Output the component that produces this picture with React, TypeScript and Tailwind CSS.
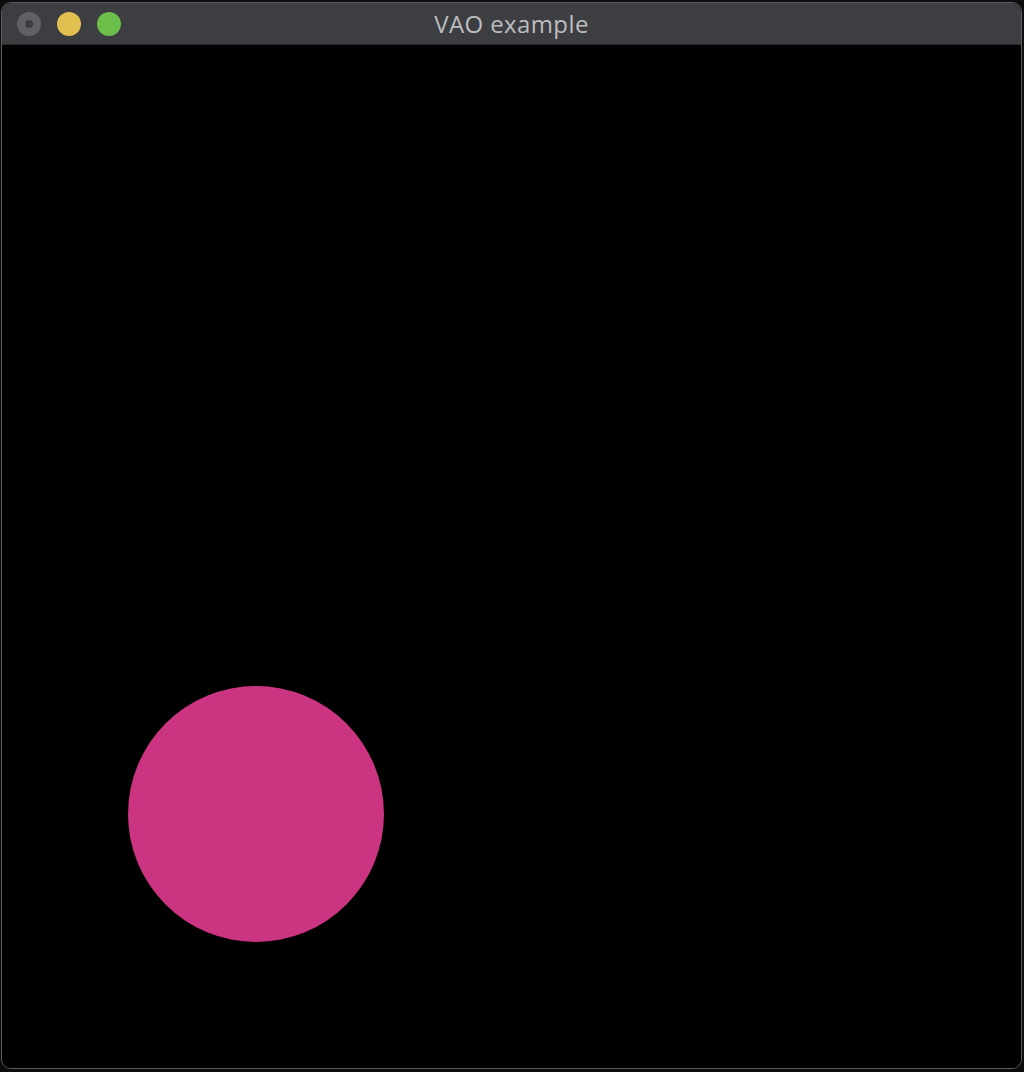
const TrafficLight = ({ color, inner }: { color: string; inner?: boolean }) => (
    <div className={`w-6 h-6 rounded-full flex items-center justify-center ${color}`}>
        {inner && <div className="w-2 h-2 rounded-full bg-[#3d3e41]" />}
    </div>
);

const App = () => {
    return (
        <div className="w-[1024px] h-[1072px] bg-[#0c0e0e] pt-[2px] pl-[1px] overflow-hidden">
            <div className="w-[1021px] h-[1067px] rounded-[10px] border border-[#5b5c60] bg-black overflow-hidden flex flex-col">
                {/* title bar */}
                <div className="relative h-[42px] shrink-0 bg-[#3d3e42] border-b border-[#2a2a2d] flex items-center">
                    <div className="flex items-center gap-4 pl-[15px] pt-[1px]">
                        <TrafficLight color="bg-[#606165]" inner />
                        <TrafficLight color="bg-[#e2c04f]" />
                        <TrafficLight color="bg-[#6bbf4a]" />
                    </div>
                    <div
                        className="absolute inset-0 flex items-center justify-center text-[24px] tracking-[0.4px] text-[#bdbdc0] pt-[1px]"
                        style={{ fontFamily: '"Open Sans", "Liberation Sans", sans-serif' }}
                    >
                        VAO example
                    </div>
                </div>

                {/* GL canvas */}
                <div className="flex-1 bg-black pl-[126px] pt-[641px]">
                    <div className="w-64 h-64 rounded-full bg-[#cb3481]" />
                </div>
            </div>
        </div>
    );
};

export default App;
